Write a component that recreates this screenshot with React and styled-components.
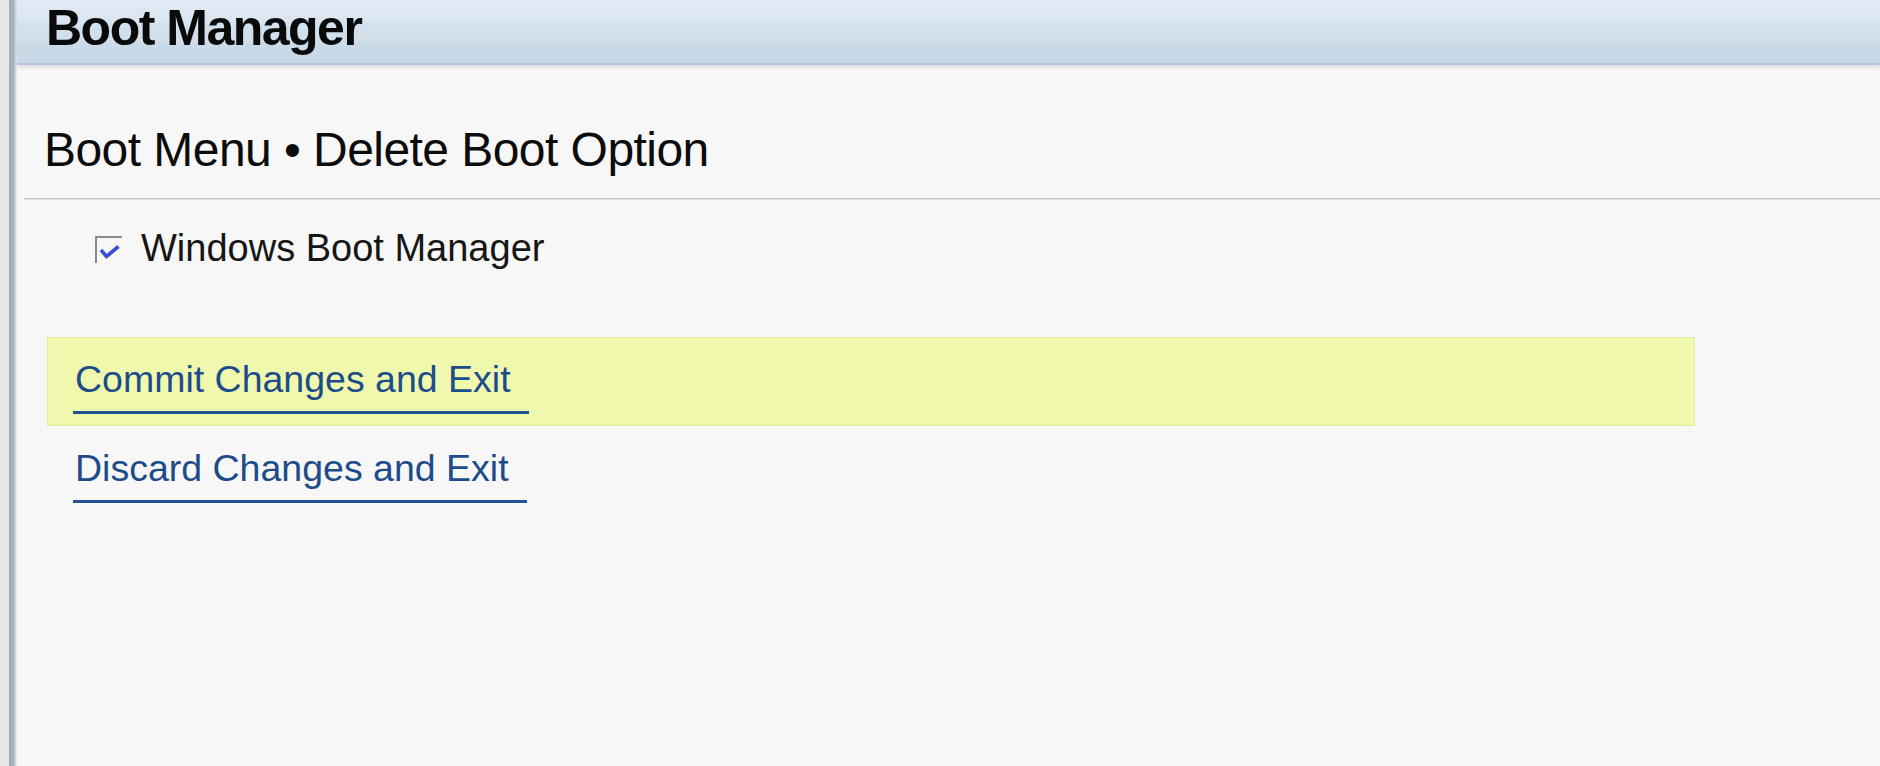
import React from "react";
import styled, { createGlobalStyle } from "styled-components";

const GlobalStyle = createGlobalStyle`
  html, body { margin: 0; padding: 0; }
  body {
    background: #f7f7f7;
    font-family: "Liberation Sans", Arial, sans-serif;
    overflow: hidden;
  }
`;

const Frame = styled.div`
  display: flex;
  height: 766px;
  width: 1880px;
`;

const Gutter = styled.div`
  width: 9px;
  flex: none;
  background: #e7e7e7;
`;

const Rail = styled.div`
  width: 8px;
  flex: none;
  background: linear-gradient(to right, #a3abb7 0px, #aab2be 5px, #c9ced6 6px, #eceef1 8px);
`;

const Main = styled.div`
  flex: 1;
  display: flex;
  flex-direction: column;
  background: #f7f7f7;
  min-width: 0;
`;

const Header = styled.header`
  height: 65px;
  flex: none;
  box-sizing: border-box;
  padding: 3px 0 0 29px;
  background: linear-gradient(
    to bottom,
    #e1eaf5 0%,
    #dbe6f0 30%,
    #d1e0ef 45%,
    #d2dfe9 60%,
    #c8d9e7 75%,
    #c7d8e6 100%
  );
  border-bottom: 2px solid #b6c6df;
  box-shadow: 0 2px 4px rgba(0, 0, 0, 0.13);
  position: relative;
  z-index: 1;
`;

const Title = styled.h1`
  margin: 0;
  font-size: 50px;
  line-height: 50px;
  font-weight: 700;
  letter-spacing: -1.5px;
  color: #0a0a0a;
`;

const Content = styled.section`
  margin-left: 7px;
  display: flex;
  flex-direction: column;
`;

const PageHeading = styled.h2`
  margin: 0;
  padding: 61px 0 24px 20px;
  font-size: 48px;
  line-height: 48px;
  font-weight: 400;
  letter-spacing: -0.55px;
  color: #0c0c0c;
  border-bottom: 1px solid #c4c4c4;
  box-shadow: 0 1px 0 #e2e2e2;
`;

const OptionList = styled.div`
  display: flex;
  flex-direction: column;
  padding: 30px 0 0 71px;
`;

const OptionRow = styled.label`
  display: flex;
  align-items: center;
  gap: 19px;
  height: 38px;
  font-size: 38px;
  line-height: 38px;
  color: #161616;
`;

const Box = styled.span`
  width: 27px;
  height: 27px;
  box-sizing: border-box;
  border-top: 2px solid #8a8a8a;
  border-left: 2px solid #8a8a8a;
  display: block;
  flex: none;
  margin-top: 3px;
`;

const Actions = styled.nav`
  display: flex;
  flex-direction: column;
  margin: 70px 0 0 23px;
  width: 1648px;
`;

const ActionItem = styled.div`
  height: 89px;
  box-sizing: border-box;
  padding: 22px 0 0 25px;
  border: 1px solid ${(p) => (p.$active ? "#e2eba0" : "transparent")};
  background: ${(p) => (p.$active ? "#f0f8ae" : "transparent")};
`;

const ActionLink = styled.a`
  display: inline-block;
  padding: 0 18px 13px 2px;
  font-size: 37.5px;
  line-height: 38px;
  color: #1c4d8a;
  text-decoration: none;
  border-bottom: 3px solid #21548f;
`;

function Check() {
  return (
    <svg width="25" height="25" viewBox="0 0 25 25" style={{ display: "block" }}>
      <path d="M4 12 L9.5 18.5 L21.5 8.5" fill="none" stroke="#3a4fd2" strokeWidth="3.6" strokeLinecap="butt" strokeLinejoin="miter" />
    </svg>
  );
}

export default function App() {
  return (
    <>
      <GlobalStyle />
      <Frame>
        <Gutter />
        <Rail />
        <Main>
          <Header>
            <Title>Boot Manager</Title>
          </Header>
          <Content>
            <PageHeading>Boot Menu • Delete Boot Option</PageHeading>
            <OptionList>
              <OptionRow>
                <Box>
                  <Check />
                </Box>
                Windows Boot Manager
              </OptionRow>
            </OptionList>
            <Actions>
              <ActionItem $active>
                <ActionLink>Commit Changes and Exit</ActionLink>
              </ActionItem>
              <ActionItem>
                <ActionLink>Discard Changes and Exit</ActionLink>
              </ActionItem>
            </Actions>
          </Content>
        </Main>
      </Frame>
    </>
  );
}
